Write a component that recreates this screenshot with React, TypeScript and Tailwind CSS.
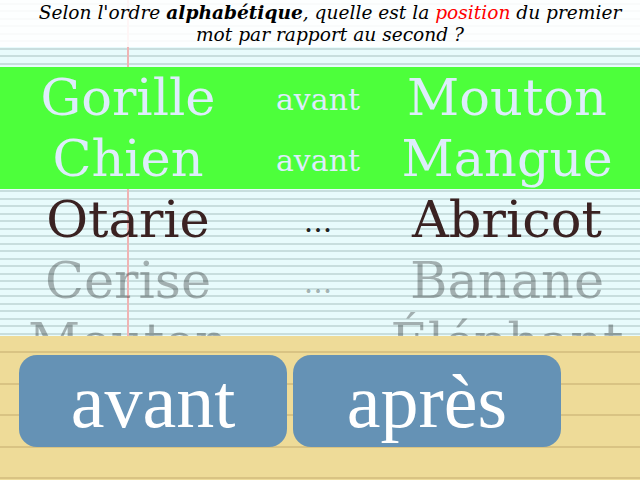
import React from "react";

const rows = [
  { a: "Gorille", m: "avant", b: "Mouton", kind: "done" },
  { a: "Chien", m: "avant", b: "Mangue", kind: "done" },
  { a: "Otarie", m: "...", b: "Abricot", kind: "current" },
  { a: "Cerise", m: "...", b: "Banane", kind: "next" },
  { a: "Mouton", m: "...", b: "Éléphant", kind: "next" },
];

export default function App() {
  return (
    <div
      className="w-[640px] h-[480px] overflow-hidden flex flex-col bg-[#e8fbfc] [background-image:linear-gradient(to_right,transparent_127px,#f0b4b4_127px,#f0b4b4_129px,transparent_129px),repeating-linear-gradient(to_bottom,transparent_0px,transparent_3px,#c8dede_3px,#c8dede_5px,transparent_5px,transparent_7.5px)]"
      style={{ fontFamily: '"DejaVu Serif", serif' }}
    >
      <div className="h-[47px] shrink-0 bg-white/[0.88] pl-[20px] flex flex-col items-center justify-center text-[18.6px] leading-[22px] italic text-black whitespace-nowrap">
        <div>
          Selon l'ordre <b>alphabétique</b>, quelle est la{" "}
          <span className="text-[#ff0000]">position</span> du premier
        </div>
        <div>mot par rapport au second ?</div>
      </div>
      <div className="flex-1 overflow-hidden pt-[20px]">
        {rows.map((r, i) => {
          const bg = r.kind === "done" ? "bg-[#4dff3b]" : "";
          const color =
            r.kind === "done"
              ? "text-[#deedfb]"
              : r.kind === "current"
              ? "text-[#3a2222]"
              : "text-black/30";
          const mid =
            r.kind === "done"
              ? "text-[#deedfb]"
              : r.kind === "current"
              ? "text-[#222]"
              : "text-black/30";
          return (
            <div key={i} className={`h-[61px] flex items-center ${bg}`}>
              <div className={`w-[256px] text-center text-[51px] leading-[61px] ${color}`}>
                {r.a}
              </div>
              <div className={`w-[124px] text-center text-[30px] leading-[36px] pt-[4px] ${mid}`}>
                {r.m}
              </div>
              <div className={`w-[254px] text-center text-[51px] leading-[61px] ${color}`}>
                {r.b}
              </div>
            </div>
          );
        })}
      </div>
      <div className="h-[144px] shrink-0 bg-[#eedb98] [background-image:repeating-linear-gradient(to_bottom,transparent_0px,transparent_15px,#d9c383_15px,#d9c383_17px,transparent_17px,transparent_31.6px)] pt-[19px] pl-[19px] flex gap-[6px] items-start">
        {["avant", "après"].map((t) => (
          <div
            key={t}
            className="w-[268px] h-[92px] rounded-[18px] bg-[#6592b5] flex items-center justify-center text-white text-[76px] leading-none"
            style={{ fontFamily: '"Liberation Serif", serif' }}
          >
            {t}
          </div>
        ))}
      </div>
    </div>
  );
}
